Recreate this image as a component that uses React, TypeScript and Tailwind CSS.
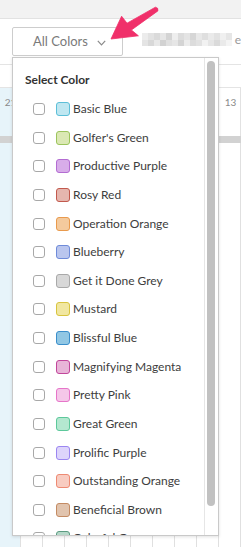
import React from 'react';

type Swatch = { name: string; fill: string; border: string };

const COLORS: Swatch[] = [
  { name: 'Basic Blue', fill: '#bfe7f1', border: '#5cbfd8' },
  { name: "Golfer's Green", fill: '#dbe8b4', border: '#9cc45c' },
  { name: 'Productive Purple', fill: '#d8ade9', border: '#b36cd2' },
  { name: 'Rosy Red', fill: '#e5b6ae', border: '#c2594d' },
  { name: 'Operation Orange', fill: '#f4ca9d', border: '#e99a4d' },
  { name: 'Blueberry', fill: '#bac6ee', border: '#6f8bd9' },
  { name: 'Get it Done Grey', fill: '#d8d8d8', border: '#a9a9a9' },
  { name: 'Mustard', fill: '#f1e7a1', border: '#d8c43f' },
  { name: 'Blissful Blue', fill: '#91c7e4', border: '#3a8ecb' },
  { name: 'Magnifying Magenta', fill: '#e8b5d8', border: '#c2469b' },
  { name: 'Pretty Pink', fill: '#f5c7e9', border: '#e675c9' },
  { name: 'Great Green', fill: '#b4e8d0', border: '#5dc89b' },
  { name: 'Prolific Purple', fill: '#ddd4fb', border: '#9b86f1' },
  { name: 'Outstanding Orange', fill: '#f8ccc1', border: '#ee8a73' },
  { name: 'Beneficial Brown', fill: '#e1c4ae', border: '#c48b63' },
  { name: 'Colorful Green', fill: '#b6d8c9', border: '#5b9b81' },
];

const COLS = Array.from({ length: 11 }, (_, i) => i);

const MOSAIC = [
  ['#ececec', '#e2e2e2', '#dadada', '#e6e6e6', '#d4d4d4', '#eeeeee', '#dcdcdc', '#e4e4e4', '#d6d6d6', '#e8e8e8', '#dfdfdf', '#eaeaea', '#e2e2e2', '#f0f0f0', '#e6e6e6'],
  ['#e4e4e4', '#d8d8d8', '#e8e8e8', '#d2d2d2', '#e0e0e0', '#e6e6e6', '#d4d4d4', '#ececec', '#dcdcdc', '#e2e2e2', '#f2f2f2', '#e6e6e6', '#dadada', '#eaeaea', '#f4f4f4'],
];

function Checkbox() {
  return <div className="w-[12px] h-[12px] rounded-[3px] border border-[#a8a8a8] bg-white shrink-0" />;
}

function ColorRow({ c }: { c: Swatch }) {
  return (
    <div className="h-[28.64px] flex items-center pl-[20px]">
      <Checkbox />
      <div
        className="w-[14px] h-[14px] rounded-[3px] border ml-[11px] shrink-0"
        style={{ backgroundColor: c.fill, borderColor: c.border }}
      />
      <span className="ml-[3px] text-[12px] text-[#3d3d3d] whitespace-nowrap">{c.name}</span>
    </div>
  );
}

function Arrow() {
  return (
    <svg className="absolute left-0 top-0 pointer-events-none" width="241" height="60" viewBox="0 0 241 60">
      <path
        d="M111 39 L121.6 16.2 L127 23.2 L155.4 7.2 Q158.6 7.6 157.9 10.9 L131.4 30 L138.4 35.8 Z"
        fill="#f0306a"
        stroke="#f0306a"
        strokeWidth="0.8"
        strokeLinejoin="round"
      />
    </svg>
  );
}

export default function App() {
  return (
    <div
      className="relative w-[241px] h-[547px] overflow-hidden bg-white flex flex-col"
      style={{ fontFamily: 'Lato, "Open Sans", Arial, sans-serif' }}
    >
      {/* top app bar */}
      <div className="h-[19px] shrink-0 bg-[#f2f2f2] border-b border-[#e2e2e2]" />

      {/* toolbar */}
      <div className="h-[46px] shrink-0 border-b border-[#e4e4e4] flex items-start pt-[8px] pl-[12px]">
        <div className="w-[111px] h-[29px] border border-[#cdcdcd] rounded-[2px] flex items-center pl-[20px] gap-[9px] text-[13px] text-[#7a7a7a]">
          <span>All Colors</span>
          <svg width="9" height="6" viewBox="0 0 9 6" className="mt-[2px]">
            <polyline points="0.8,0.8 4.5,4.8 8.2,0.8" fill="none" stroke="#8a8a8a" strokeWidth="1.2" />
          </svg>
        </div>
        <div className="ml-[19px] mt-[6px] flex flex-col">
          {MOSAIC.map((row, r) => (
            <div key={r} className="flex">
              {row.map((c, i) => (
                <div key={i} className="w-[6px] h-[6.5px]" style={{ backgroundColor: c }} />
              ))}
            </div>
          ))}
        </div>
        <span className="ml-[3px] mt-[4px] text-[12px] text-[#9a9a9a]">e</span>
      </div>

      {/* day header */}
      <div className="h-[23px] shrink-0 border-b border-[#e4e4e4]" />

      {/* calendar body */}
      <div className="flex-1 flex flex-col">
        <div className="h-[48px] flex ml-[-1.3px]">
          {COLS.map(i => (
            <div
              key={i}
              className={`w-[22px] shrink-0 border-r border-[#e2e2e2] pl-[6px] pt-[7px] text-[10px] text-[#8a8a8a] ${i === 0 ? 'bg-[#e7f4fa]' : 'bg-white'}`}
            >
              {i === 0 ? '21' : i === 10 ? '13' : ''}
            </div>
          ))}
        </div>
        <div className="h-[7px] bg-[#d2d2d2]" />
        <div className="flex-1 flex ml-[-1.3px]">
          {COLS.map(i => (
            <div
              key={i}
              className={`w-[22px] shrink-0 border-r border-[#e0e0e0] ${i === 0 ? 'bg-[#e7f4fa]' : 'bg-white'}`}
            />
          ))}
        </div>
      </div>

      {/* dropdown menu */}
      <div className="absolute left-[12px] top-[57px] w-[207px] h-[479px] bg-white border border-[#c9c9c9] shadow-[0_1px_3px_rgba(0,0,0,0.12)] overflow-hidden flex">
        <div className="flex-1 overflow-hidden">
          <div className="pt-[15px] pl-[12px] h-[29px] text-[12px] leading-[14px] font-bold text-[#333]">Select Color</div>
          <div className="mt-[7.7px]">
            {COLORS.map(c => (
              <ColorRow key={c.name} c={c} />
            ))}
          </div>
        </div>
        <div className="w-[14px] shrink-0 border-l border-[#e6e6e6] pt-[3px] pl-[2px] pr-[3px]">
          <div className="h-[445px] rounded-full bg-[#c1c1c1]" />
        </div>
      </div>

      <Arrow />
    </div>
  );
}
